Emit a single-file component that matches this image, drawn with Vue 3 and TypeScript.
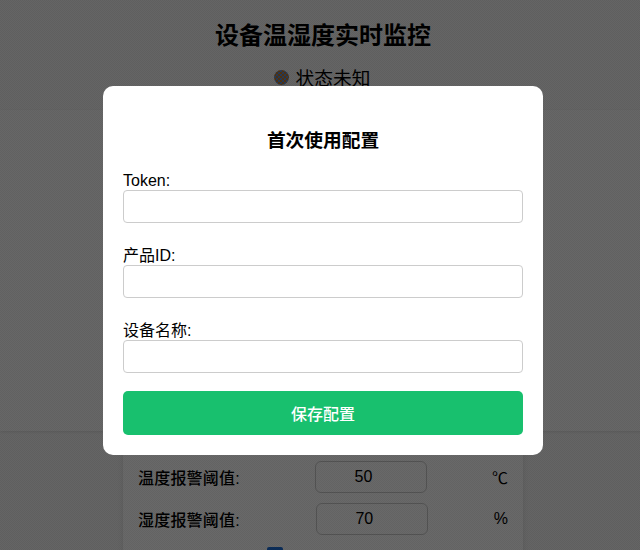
<template>
  <div class="page">
    <header class="page-header">
      <h1 class="page-title">设备温湿度实时监控</h1>
      <div class="status">
        <span class="status-dot"></span>
        <span>状态未知</span>
      </div>
    </header>

    <section class="chart-band"></section>

    <section class="settings">
      <div class="threshold-row first">
        <label class="threshold-label">温度报警阈值:</label>
        <input class="threshold-input" type="text" :value="tempLimit" readonly />
        <span class="threshold-unit">℃</span>
      </div>
      <div class="threshold-row second">
        <label class="threshold-label">湿度报警阈值:</label>
        <input class="threshold-input" type="text" :value="humLimit" readonly />
        <span class="threshold-unit">%</span>
      </div>
      <div class="switch-row">
        <span class="check"></span>
      </div>
    </section>

    <div class="overlay">
      <div class="dialog">
        <h3 class="dialog-title">首次使用配置</h3>
        <div v-for="item in fields" :key="item.key" class="field">
          <label class="field-label">{{ item.label }}</label>
          <input v-model="form[item.key]" class="field-input" type="text" />
        </div>
        <button class="save-btn" type="button">保存配置</button>
      </div>
    </div>
  </div>
</template>

<script setup lang="ts">
import { reactive } from 'vue'

type FieldKey = 'token' | 'productId' | 'deviceName'

const tempLimit = 50
const humLimit = 70

const fields: { key: FieldKey; label: string }[] = [
  { key: 'token', label: 'Token:' },
  { key: 'productId', label: '产品ID:' },
  { key: 'deviceName', label: '设备名称:' }
]

const form = reactive<Record<FieldKey, string>>({
  token: '',
  productId: '',
  deviceName: ''
})
</script>

<style>
html,
body {
  margin: 0;
  height: 100%;
  overflow: hidden;
  background: #f5f5f5;
}
</style>

<style scoped>
/* 页面比窗口略宽，内容中心在 323px */
.page {
  width: 646px;
  height: 550px;
  overflow: hidden;
  color: #000;
  font-family: "Liberation Sans", "Noto Sans CJK SC", sans-serif;
  font-size: 16px;
}

.page-header {
  height: 110px;
  box-sizing: border-box;
  padding-top: 21px;
  text-align: center;
  background: #f5f5f5;
}

.page-title {
  margin: 0;
  font-size: 24px;
  line-height: 30px;
  font-weight: 700;
}

.status {
  display: flex;
  justify-content: center;
  align-items: center;
  gap: 7px;
  margin-top: 14px;
  padding-right: 2px;
  font-size: 18.72px;
  line-height: 28px;
}

.status-dot {
  width: 15px;
  height: 15px;
  margin-top: -3px;
  border-radius: 50%;
  background: repeating-conic-gradient(#5f8fd0 0 25%, #c07a30 0 50%) 0 0 / 4px 4px;
}

.chart-band {
  height: 321px;
  background: #f9f9f9;
  box-shadow: 0 1px 3px rgba(0, 0, 0, 0.1);
}

.settings {
  width: 400px;
  height: 130px;
  margin: 0 auto;
  box-sizing: border-box;
  padding: 30px 15px 0;
  background: #ffffff;
  border-radius: 8px;
  box-shadow: 0 0 6px rgba(0, 0, 0, 0.1);
}

.threshold-row {
  display: flex;
  align-items: center;
  justify-content: space-between;
  height: 32px;
}

.threshold-row.second {
  margin-top: 10px;
}

.threshold-label {
  width: 113px;
  font-weight: 500;
  letter-spacing: 0.2px;
  white-space: nowrap;
}

.threshold-input {
  width: 112px;
  height: 32px;
  box-sizing: border-box;
  padding: 0 16px 0 0;
  text-align: center;
  font-size: 16px;
  font-family: inherit;
  color: #000;
  background: transparent;
  border: 1px solid #ccc;
  border-radius: 6px;
  outline: none;
}

.switch-row {
  display: flex;
  justify-content: center;
  padding: 12px 96px 0 0;
}

.check {
  width: 16px;
  height: 16px;
  border-radius: 2px;
  background: #1e6fd9;
}

.overlay {
  position: fixed;
  inset: 0;
  width: 646px;
  display: flex;
  align-items: center;
  justify-content: center;
  background: repeating-conic-gradient(rgba(0, 0, 0, 0.59) 0 25%, rgba(0, 0, 0, 0.61) 0 50%) 0 0 / 2px 2px;
}

.dialog {
  width: 440px;
  height: 369px;
  margin-bottom: 9px;
  box-sizing: border-box;
  padding: 41px 20px 0;
  background: #fff;
  border-radius: 10px;
}

.dialog-title {
  margin: 0 0 17px;
  text-align: center;
  font-size: 18.72px;
  line-height: 28px;
  font-weight: 700;
}

.field {
  margin-bottom: 24px;
}

.field:last-of-type {
  margin-bottom: 18px;
}

.field-label {
  display: block;
  line-height: 18px;
}

.field-input {
  display: block;
  width: 100%;
  height: 33px;
  box-sizing: border-box;
  border: 1px solid #ccc;
  border-radius: 4px;
  outline: none;
}

.save-btn {
  display: block;
  width: 100%;
  height: 44px;
  border: none;
  border-radius: 5px;
  background: #18c06e;
  color: #fff;
  font-family: inherit;
  font-size: 16px;
  font-weight: 500;
}
</style>
